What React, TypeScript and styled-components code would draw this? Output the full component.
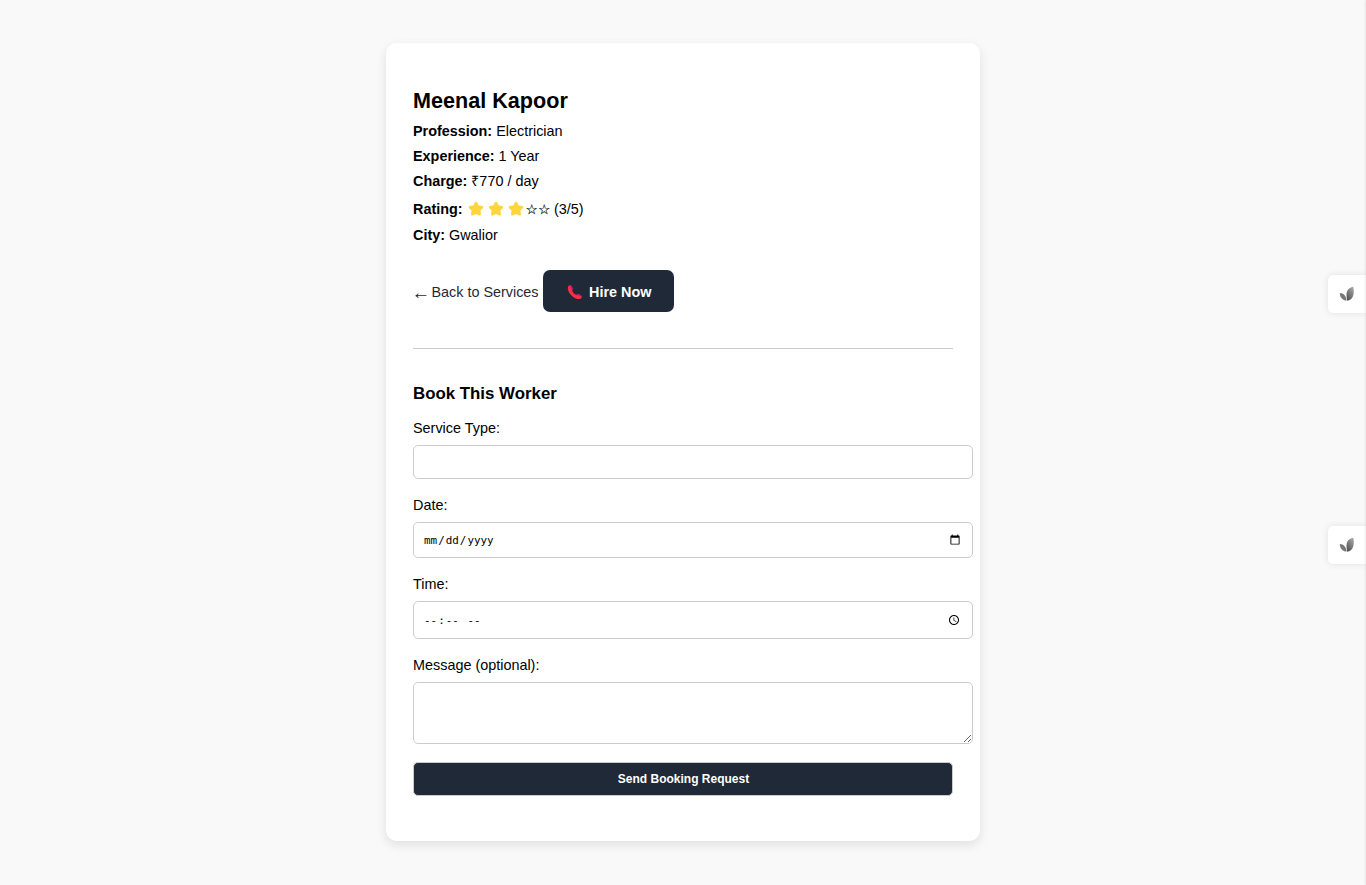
import React from "react";
import styled, { createGlobalStyle } from "styled-components";

const GlobalStyle = createGlobalStyle`
  body {
    margin: 0;
    background: #f9f9f9;
    color: #000;
    font-family: Arial, "Liberation Sans", sans-serif;
    font-size: 14.4px;
    line-height: 17px;
  }
`;

const Page = styled.main`
  position: relative;
  min-height: 885px;
  box-sizing: border-box;
  padding: 43px 0 44px;
  overflow: hidden;
`;

const Card = styled.section`
  box-sizing: border-box;
  width: 594px;
  height: 798px;
  margin: 0 auto;
  padding: 45px 27px 0;
  border-radius: 11px;
  background: #fff;
  box-shadow: 0 4px 11px rgba(0, 0, 0, 0.1);
`;

const Name = styled.h2`
  margin: 0 0 10px;
  font-size: 21.6px;
  line-height: 25px;
`;

const Detail = styled.p<{ $tall?: boolean }>`
  display: flex;
  align-items: center;
  box-sizing: border-box;
  height: ${(p) => (p.$tall ? 21 : 17)}px;
  padding-top: ${(p) => (p.$tall ? 2 : 0)}px;
  margin: 0 0 8px;
  white-space: pre;
`;

const Stars = styled.span`
  display: flex;
  gap: 4px;
  margin: 0 1.5px 1px 1.5px;
`;

const EmptyStars = styled.span`
  width: 24.5px;
  font-family: "DejaVu Sans", sans-serif;
  font-size: 13.8px;
  -webkit-text-stroke: 0.15px #000;
`;

const Actions = styled.div`
  display: flex;
  align-items: center;
  gap: 4px;
  height: 42px;
  margin-top: 26px;
`;

const BackLink = styled.a`
  display: flex;
  color: #1f2937;
  text-decoration: none;
  padding-top: 2px;
  width: 126px;
  white-space: nowrap;
`;

const Arrow = styled.span`
  width: 19.9px;
  margin-left: -1.5px;
  font-family: "Liberation Sans", sans-serif;
  font-size: 18.5px;
`;

const HireButton = styled.a`
  display: flex;
  align-items: center;
  box-sizing: border-box;
  width: 131px;
  height: 42px;
  padding: 2px 0 0 24px;
  gap: 6px;
  border-radius: 7px;
  background: #1f2937;
  color: #fff;
  font-weight: bold;
`;

const Divider = styled.hr`
  height: 1px;
  margin: 36px 0 35px;
  border: 0;
  background: #ccc;
`;

const FormTitle = styled.h3`
  margin: 0 0 17px;
  font-size: 16.85px;
  line-height: 19px;
`;

const Label = styled.label`
  display: block;
  height: 17px;
  margin-bottom: 8px;
`;

const Input = styled.input<{ $height: number }>`
  display: block;
  box-sizing: border-box;
  width: 560px;
  height: ${(p) => p.$height}px;
  margin: 0 0 18px;
  padding: 9px;
  border: 1px solid #ccc;
  border-radius: 5px;
  background: #fff;
  color: #000;
  font: 10.9px "DejaVu Sans Mono", monospace;

  &::-webkit-calendar-picker-indicator {
    width: 12px;
    height: 12px;
  }
`;

const Message = styled.textarea`
  display: block;
  box-sizing: border-box;
  width: 560px;
  height: 62px;
  margin: 0 0 18px;
  padding: 9px;
  border: 1px solid #ccc;
  border-radius: 5px;
  background: #fff;
`;

const Submit = styled.button`
  display: block;
  width: 540px;
  height: 34px;
  padding: 0 0 0 1px;
  border: 1px solid #ccc;
  border-radius: 5px;
  background: #1f2937;
  color: #fff;
  font: bold 12px Arial, "Liberation Sans", sans-serif;
`;

const SideTab = styled.div<{ $top: number }>`
  position: absolute;
  right: 0;
  top: ${(p) => p.$top}px;
  display: flex;
  align-items: center;
  box-sizing: border-box;
  width: 38px;
  height: 38px;
  padding-left: 11px;
  border-radius: 5px 0 0 5px;
  background: #fff;
  box-shadow: 0 0 7px rgba(0, 0, 0, 0.1);
`;

const EdgeShade = styled.div`
  position: absolute;
  top: 0;
  right: -1px;
  width: 1px;
  height: 100%;
  box-shadow: 0 0 3px rgba(0, 0, 0, 0.25);
`;

const Star = () => (
  <svg width="16" height="16" viewBox="0 0 16 16">
    <path
      d="M8 1.9 9.9 5.5 14 6.1 11.2 9.2 11.8 13.4 8 11.6 4.2 13.4 4.8 9.2 2 6.1 6.1 5.5Z"
      fill="#ffd53d"
      stroke="#ffd53d"
      strokeWidth="2.4"
      strokeLinejoin="round"
    />
  </svg>
);

const Phone = () => (
  <svg width="16" height="16" viewBox="0 0 16 16">
    <path
      d="M1.2 2.2C2 1.2 3.3.8 4.1 1.6L5.9 4.5C6.2 5.2 5.3 5.9 5.1 6.4 5.5 8.2 7.5 10.2 9.4 10.8 10 10.7 10.7 9.8 11.4 10L14.3 11.8C15.2 12.6 14.7 14 13.6 14.7 11.4 15.8 7.4 14.4 4.4 11.4 1.5 8.5.1 4.6 1.2 2.2Z"
      fill="#f92f40"
    />
    <path
      d="M2.8 1.1 4.3 1.4 6.3 4.7 5.1 6.7 4.3 4.4ZM9.2 10.9 11.4 9.7 14.7 11.9 15 13.1 11.5 11.5Z"
      fill="#a7217c"
    />
  </svg>
);

const Leaf = ({ id }: { id: string }) => (
  <svg width="16" height="16" viewBox="0 0 16 16">
    <defs>
      <linearGradient id={id} x1="1" y1="0" x2="0.3" y2="1">
        <stop offset="0" stopColor="#b0b0b0" />
        <stop offset="1" stopColor="#555" />
      </linearGradient>
    </defs>
    <path d="M.8 7C4.4 7.2 7 9.3 7.6 14.6 3.6 14.4 .8 11.4 .8 7Z" fill="#777" />
    <path d="M14.3.8C8.4 2 6.3 5.6 8.2 14.8 14 14.2 15.8 8 14.3.8Z" fill={`url(#${id})`} />
  </svg>
);

export default function App() {
  return (
    <Page>
      <GlobalStyle />
      <Card>
        <Name>Meenal Kapoor</Name>
        <Detail><strong>Profession:</strong> Electrician</Detail>
        <Detail><strong>Experience:</strong> 1 Year</Detail>
        <Detail><strong>Charge:</strong> ₹770 / day</Detail>
        <Detail $tall>
          <strong>Rating: </strong>
          <Stars><Star /><Star /><Star /></Stars>
          <EmptyStars>☆☆</EmptyStars> (3/5)
        </Detail>
        <Detail><strong>City:</strong> Gwalior</Detail>
        <Actions>
          <BackLink><Arrow>←</Arrow>Back to Services</BackLink>
          <HireButton><Phone />Hire Now</HireButton>
        </Actions>
        <Divider />
        <FormTitle>Book This Worker</FormTitle>
        <Label htmlFor="service">Service Type:</Label>
        <Input id="service" type="text" $height={34} />
        <Label htmlFor="date">Date:</Label>
        <Input id="date" type="date" $height={36} />
        <Label htmlFor="time">Time:</Label>
        <Input id="time" type="time" $height={38} />
        <Label htmlFor="message">Message (optional):</Label>
        <Message id="message" />
        <Submit type="button">Send Booking Request</Submit>
      </Card>
      <SideTab $top={275.4}><Leaf id="leaf-upper" /></SideTab>
      <SideTab $top={526.4}><Leaf id="leaf-lower" /></SideTab>
      <EdgeShade />
    </Page>
  );
}
